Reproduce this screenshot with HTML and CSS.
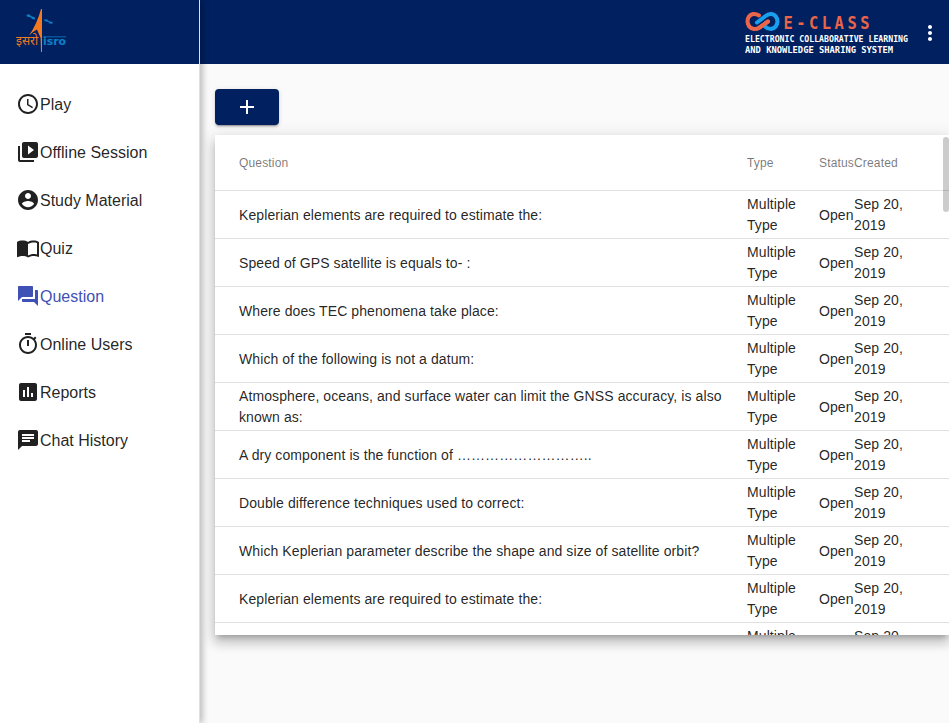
FILE: index.html
```html
<!DOCTYPE html>
<html lang="en">
<head>
<meta charset="utf-8">
<title>E-CLASS</title>
<link rel="stylesheet" href="styles.css">
</head>
<body>
<div class="app">
  <aside class="sidebar">
    <div class="brand">
      <svg class="isro" width="52" height="44" viewBox="0 0 52 44">
        <path d="M25 0 26 0V43H25L24.600 29 21 20.500Q17 22.500 13 26.500 21 15 25 0Z" fill="#f47920"/>
        <path d="M10.500 5.500h3l1.500 1.500 4 1.500v2l-3-.5-1-1.500-4-1zM28 10.500h3l1.500 1.500 4 1v1.800l-3-.3-1-1.500-4-1z" fill="#0b80c8"/>
        <text class="hindi" x="0" y="35.500" textLength="22" lengthAdjust="spacingAndGlyphs">इसरो</text>
        <text class="isro-name" x="27" y="35.500" textLength="23" lengthAdjust="spacingAndGlyphs">isro</text>
        <path d="M27 27.800H50" stroke="#0b80c8" stroke-width=".8"/>
      </svg>
    </div>
    <nav class="menu">
      <a class="item"><svg viewBox="0 0 24 24"><path d="M11.990 2C6.470 2 2 6.480 2 12s4.470 10 9.990 10C17.520 22 22 17.520 22 12S17.520 2 11.990 2zM12 20c-4.420 0-8-3.580-8-8s3.580-8 8-8 8 3.580 8 8-3.580 8-8 8zm.5-13H11v6l5.250 3.150.75-1.230-4.500-2.670z"/></svg>Play</a>
      <a class="item"><svg viewBox="0 0 24 24"><path d="M4 6H2v14c0 1.100.9 2 2 2h14v-2H4V6zm16-4H8c-1.100 0-2 .9-2 2v12c0 1.100.9 2 2 2h12c1.100 0 2-.9 2-2V4c0-1.100-.9-2-2-2zm-8 12.500v-9l6 4.500-6 4.500z"/></svg>Offline Session</a>
      <a class="item"><svg viewBox="0 0 24 24"><path d="M12 2C6.480 2 2 6.480 2 12s4.480 10 10 10 10-4.480 10-10S17.520 2 12 2zm0 3c1.660 0 3 1.340 3 3s-1.340 3-3 3-3-1.340-3-3 1.340-3 3-3zm0 14.200c-2.500 0-4.710-1.280-6-3.220.03-1.990 4-3.080 6-3.080 1.990 0 5.970 1.090 6 3.080-1.290 1.940-3.500 3.220-6 3.220z"/></svg>Study Material</a>
      <a class="item"><svg viewBox="0 0 24 24"><path d="M21 5c-1.110-.35-2.330-.5-3.500-.5-1.950 0-4.050.4-5.500 1.500-1.450-1.100-3.550-1.500-5.500-1.500S2.450 4.900 1 6v14.650c0 .25.25.5.5.5.1 0 .15-.05.25-.05C3.100 20.450 5.050 20 6.500 20c1.950 0 4.050.4 5.500 1.500 1.350-.85 3.800-1.500 5.500-1.500 1.650 0 3.350.3 4.750 1.050.1.05.15.05.25.05.25 0 .5-.25.5-.5V6c-.6-.45-1.250-.75-2-1zm0 13.500c-1.100-.35-2.300-.5-3.500-.5-1.700 0-4.150.65-5.500 1.500V8c1.350-.85 3.800-1.500 5.500-1.500 1.200 0 2.400.15 3.500.5v11.500z"/></svg>Quiz</a>
      <a class="item active"><svg viewBox="0 0 24 24"><path d="M21 6h-2v9H6v2c0 .55.45 1 1 1h11l4 4V7c0-.55-.45-1-1-1zm-4 6V3c0-.55-.45-1-1-1H3c-.55 0-1 .45-1 1v14l4-4h10c.55 0 1-.45 1-1z"/></svg>Question</a>
      <a class="item"><svg viewBox="0 0 24 24"><path d="M15 1H9v2h6V1zm-4 13h2V8h-2v6zm8.030-6.610l1.420-1.420c-.43-.51-.9-.99-1.410-1.410l-1.420 1.420C16.070 4.740 14.120 4 12 4c-4.970 0-9 4.030-9 9s4.020 9 9 9 9-4.030 9-9c0-2.120-.74-4.070-1.970-5.610zM12 20c-3.870 0-7-3.130-7-7s3.130-7 7-7 7 3.130 7 7-3.130 7-7 7z"/></svg>Online Users</a>
      <a class="item"><svg viewBox="0 0 24 24"><path d="M19 3H5c-1.100 0-2 .9-2 2v14c0 1.100.9 2 2 2h14c1.100 0 2-.9 2-2V5c0-1.100-.9-2-2-2zM9 17H7v-7h2v7zm4 0h-2V7h2v10zm4 0h-2v-4h2v4z"/></svg>Reports</a>
      <a class="item"><svg viewBox="0 0 24 24"><path d="M20 2H4c-1.100 0-1.990.9-1.990 2L2 22l4-4h14c1.100 0 2-.9 2-2V4c0-1.100-.9-2-2-2zM6 9h12v2H6V9zm8 5H6v-2h8v2zm4-6H6V6h12v2z"/></svg>Chat History</a>
    </nav>
  </aside>
  <div class="page">
    <header class="topbar">
      <svg class="eclass" width="168" height="50" viewBox="0 0 168 50">
        <g fill="none" stroke-width="4" stroke-linecap="round" stroke-linejoin="round">
          <path d="M14 7.500Q11 5.500 8 6 2.500 7.500 2.500 13.500 3 20 9 21 12 21.200 14.500 19.500L23 13.500" stroke="#ea6549"/>
          <path d="M12 14.500 20.500 8Q23.500 5.500 26.500 6 32 7 32.500 13.500 32 20 26 21 22.500 21 20 18.500" stroke="#18a0ee"/>
          <path d="M14.500 19.500 23 13.500" stroke="#ea6549"/>
        </g>
        <g transform="translate(38.500 21) scale(.86 1)"><text class="logo-title" x="0" y="0" textLength="100">E-CLASS</text></g>
        <text class="logo-sub" x="0" y="34" textLength="163" lengthAdjust="spacingAndGlyphs">ELECTRONIC COLLABORATIVE LEARNING</text>
        <text class="logo-sub" x="0" y="44.500" textLength="148" lengthAdjust="spacingAndGlyphs">AND KNOWLEDGE SHARING SYSTEM</text>
      </svg>
      <svg class="more" width="24" height="24" viewBox="0 0 24 24"><path d="M12 8c1.100 0 2-.9 2-2s-.9-2-2-2-2 .9-2 2 .9 2 2 2zm0 2c-1.100 0-2 .9-2 2s.9 2 2 2 2-.9 2-2-.9-2-2-2zm0 6c-1.100 0-2 .9-2 2s.9 2 2 2 2-.9 2-2-.9-2-2-2z"/></svg>
    </header>
    <main class="content">
      <button class="add"><svg width="24" height="24" viewBox="0 0 24 24"><path d="M19 13h-6v6h-2v-6H5v-2h6V5h2v6h6v2z"/></svg></button>
      <section class="table">
        <div class="row head"><span>Question</span><span>Type</span><span>Status</span><span>Created</span></div>
        <div class="row"><span class="line">Keplerian elements are required to estimate the:</span><span>Multiple Type</span><span class="line">Open</span><span>Sep 20, 2019</span></div>
        <div class="row"><span class="line">Speed of GPS satellite is equals to- :</span><span>Multiple Type</span><span class="line">Open</span><span>Sep 20, 2019</span></div>
        <div class="row"><span class="line">Where does TEC phenomena take place:</span><span>Multiple Type</span><span class="line">Open</span><span>Sep 20, 2019</span></div>
        <div class="row"><span class="line">Which of the following is not a datum:</span><span>Multiple Type</span><span class="line">Open</span><span>Sep 20, 2019</span></div>
        <div class="row"><span>Atmosphere, oceans, and surface water can limit the GNSS accuracy, is also known as:</span><span>Multiple Type</span><span class="line">Open</span><span>Sep 20, 2019</span></div>
        <div class="row"><span class="line">A dry component is the function of ………………………..</span><span>Multiple Type</span><span class="line">Open</span><span>Sep 20, 2019</span></div>
        <div class="row"><span class="line">Double difference techniques used to correct:</span><span>Multiple Type</span><span class="line">Open</span><span>Sep 20, 2019</span></div>
        <div class="row"><span class="line">Which Keplerian parameter describe the shape and size of satellite orbit?</span><span>Multiple Type</span><span class="line">Open</span><span>Sep 20, 2019</span></div>
        <div class="row"><span class="line">Keplerian elements are required to estimate the:</span><span>Multiple Type</span><span class="line">Open</span><span>Sep 20, 2019</span></div>
        <div class="row"><span></span><span>Multiple Type</span><span></span><span>Sep 20, 2019</span></div>
        <i class="thumb"></i>
      </section>
    </main>
  </div>
</div>
</body>
</html>
```
FILE: styles.css
```css
* { box-sizing: border-box; }
body { margin: 0; font-family: "Liberation Sans", Arial, sans-serif; color: rgba(0,0,0,.87); background: #fafafa; }
.app { display: flex; height: 723px; overflow: hidden; }
.sidebar { position: relative; z-index: 1; flex: 0 0 200px; background: #fff; border-right: 1px solid #e0e0e0; box-shadow: 3px 0 6px rgba(0,0,0,.24); }
.brand { height: 64px; padding: 9px 0 0 16px; background: #002060; }
.isro { display: block; }
.hindi { font: 12px "Noto Sans Devanagari", "Noto Sans", sans-serif; fill: #f47920; }
.isro-name { font: bold 11px "DejaVu Sans", sans-serif; fill: #0b80c8; }
.menu { padding-top: 16px; }
.item { display: flex; align-items: center; height: 48px; padding: 2px 0 0 16px; font-size: 16px; }
.item svg { width: 24px; height: 24px; margin-top: -2px; fill: #212121; }
.active { color: #3f51b5; }
.item.active svg { fill: #3f51b5; }
.page { flex: 1; min-width: 0; }
.topbar { display: flex; justify-content: flex-end; align-items: flex-start; height: 64px; padding: 8px 7px 0 0; background: #002060; }
.eclass { margin-right: 5px; overflow: visible; }
.logo-title { font: bold 18px "DejaVu Sans Mono", monospace; fill: #ea6549; }
.logo-sub { font: bold 9.5px "DejaVu Sans Mono", monospace; fill: #fff; }
.more { margin-top: 13px; fill: #fff; }
.content { padding: 25px 0 0 15px; }
.add { display: flex; align-items: center; justify-content: center; width: 64px; height: 36px; padding: 0; border: 0; border-radius: 4px; background: #002060; box-shadow: 0 3px 1px -2px rgba(0,0,0,.2), 0 2px 2px rgba(0,0,0,.14), 0 1px 5px rgba(0,0,0,.12); }
.add svg { fill: #fff; }
.table { position: relative; height: 500px; margin-top: 10px; overflow: hidden; background: #fff; box-shadow: 0 5px 5px -3px rgba(0,0,0,.2), 0 8px 10px 1px rgba(0,0,0,.14), 0 3px 14px 2px rgba(0,0,0,.12); }
.row { display: grid; grid-template-columns: 508px 72px 35px 56px; align-items: center; height: 48px; padding-left: 24px; border-bottom: 1px solid #e0e0e0; font-size: 14px; line-height: 21px; letter-spacing: .09px; }
.row span:first-child { padding-right: 22px; }
.row span:nth-child(2) { padding-right: 20px; }
.line, .head span { padding-top: 2px; }
.head { height: 56px; font-size: 12px; letter-spacing: .16px; color: rgba(0,0,0,.54); }
.thumb { position: absolute; top: 2px; right: 0; width: 6px; height: 75px; border-radius: 3px; background: rgba(0,0,0,.2); }
```
